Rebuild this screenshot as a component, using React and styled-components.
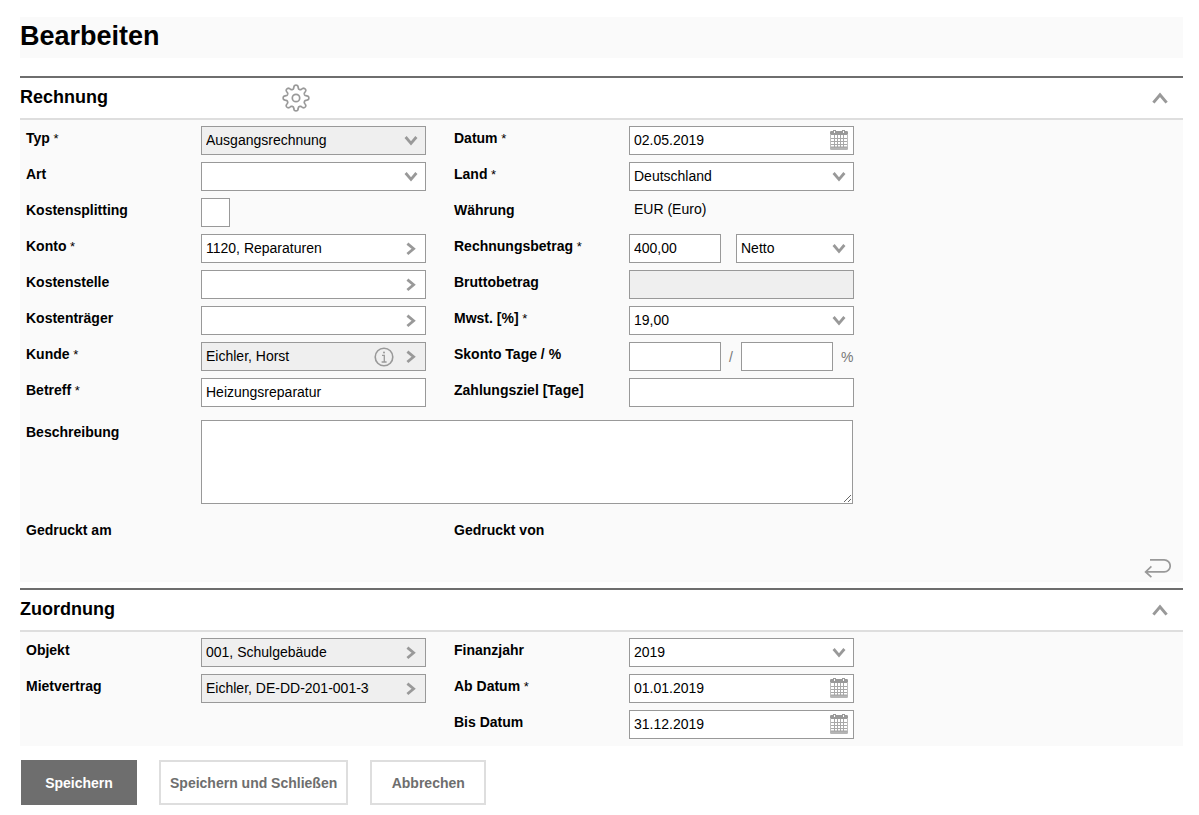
import React from "react";
import styled, { createGlobalStyle, css } from "styled-components";

const GlobalStyle = createGlobalStyle`
  *, *::before, *::after { box-sizing: border-box; }
  body {
    margin: 0;
    background: #fff;
    color: #000;
    font-family: "Liberation Sans", Arial, Helvetica, sans-serif;
    font-size: 14px;
  }
`;

const Page = styled.form`
  padding: 17px 16px 10px 20px;
`;

const Title = styled.h1`
  margin: 0 0 18px;
  height: 41px;
  background: #fafafa;
  font-size: 27px;
  line-height: 38px;
`;

const Section = styled.section`
  & + & {
    margin-top: 6px;
  }
`;

const SectionHeader = styled.header`
  display: flex;
  align-items: center;
  height: 44px;
  padding-right: 15px;
  border-top: 2px solid #6e6e6e;
  border-bottom: 2px solid #dedede;
`;

const SectionTitle = styled.h2`
  flex: 0 0 262px;
  margin: 0;
  font-size: 18px;
  line-height: 38px;
  padding-bottom: 2px;
`;

const IconButton = styled.button`
  display: flex;
  align-items: center;
  justify-content: center;
  flex: none;
  padding: 0;
  border: 0;
  background: none;
  color: #999;
  cursor: pointer;
`;

const CollapseButton = styled(IconButton)`
  margin-left: auto;
`;

const SectionBody = styled.div`
  padding: 6px 0 0 6px;
  background: #fafafa;
`;

const Columns = styled.div`
  display: grid;
  grid-template-columns: minmax(0, 400px) minmax(0, 400px);
  column-gap: 28px;
  padding-bottom: ${(p) => p.$bottom || 0}px;
`;

const Column = styled.div`
  display: flex;
  flex-direction: column;
  gap: 7px;
`;

const Row = styled.div`
  display: flex;
  align-items: flex-start;
  min-height: ${(p) => (p.$compact ? 25 : 29)}px;
`;

const Label = styled.label`
  flex: 0 0 175px;
  font-weight: bold;
  line-height: 25px;
`;

const Required = styled.span`
  font-size: 13px;
  font-weight: normal;
`;

const Controls = styled.div`
  display: flex;
  align-items: center;
  flex: 1;
  min-width: 0;
  gap: ${(p) => p.$gap || 0}px;
`;

const Frame = styled.div`
  display: grid;
  grid-template-columns: minmax(0, 1fr) auto auto;
  flex: ${(p) => (p.$width ? `0 1 ${p.$width}px` : "1 1 0")};
  min-width: 0;
  height: 29px;
  border: 1px solid #999;
  background: ${(p) => (p.$locked ? "#efefef" : "#fff")};
`;

const fieldText = css`
  width: 100%;
  min-width: 0;
  height: 27px;
  margin: 0;
  border: 0;
  border-radius: 0;
  outline: 0;
  background: transparent;
  color: #000;
  font: inherit;
  opacity: 1;
`;

const Input = styled.input`
  ${fieldText}
  padding: 0 ${(p) => (p.$room ? 28 : 4)}px 2px 4px;
`;

const Select = styled.select`
  ${fieldText}
  appearance: none;
  grid-area: 1 / 1 / 2 / 4;
  padding: 0 28px 2px 4px;
`;

const SelectArrow = styled.span`
  display: flex;
  align-items: center;
  justify-content: center;
  grid-area: 1 / 3 / 2 / 4;
  width: 28px;
  color: #999;
  pointer-events: none;
`;

const FieldButton = styled(IconButton)`
  width: ${(p) => p.$width || 28}px;
  height: 27px;
`;

const DateButton = styled(FieldButton)`
  padding-bottom: 2px;
`;

const Checkbox = styled.input`
  appearance: none;
  width: 29px;
  height: 29px;
  margin: 0;
  border: 1px solid #999;
  background: #fff;

  &:checked {
    box-shadow: inset 0 0 0 7px #fff;
    background: #6e6e6e;
  }
`;

const Value = styled.output`
  padding-left: 5px;
  line-height: 23px;
`;

const Unit = styled.span`
  color: #777;
`;

const TextArea = styled.textarea`
  flex: 0 1 652px;
  min-width: 0;
  height: 84px;
  padding: 4px;
  border: 1px solid #999;
  border-radius: 0;
  background: #fff;
  font: inherit;
  resize: both;
`;

const DescriptionRow = styled(Row)`
  margin: 13px 0 14px;
`;

const SectionFooter = styled.div`
  display: flex;
  justify-content: flex-end;
  padding: 15px 12px 4px 0;
`;

const Actions = styled.div`
  display: flex;
  gap: 22px;
  padding: 14px 0 0 1px;
`;

const Button = styled.button`
  min-width: 116px;
  height: 45px;
  padding: 0 9px;
  border: 2px solid ${(p) => (p.$primary ? "#6e6e6e" : "#dedede")};
  background: ${(p) => (p.$primary ? "#6e6e6e" : "#fff")};
  color: ${(p) => (p.$primary ? "#fff" : "#6e6e6e")};
  font: inherit;
  font-weight: bold;
  cursor: pointer;
`;

const ChevronDown = () => (
  <svg width="14" height="10" viewBox="0 0 14 10" fill="none" stroke="currentColor" strokeWidth="2.8" aria-hidden="true">
    <path d="M1.6 1 7 7.4 12.4 1" />
  </svg>
);

const ChevronRight = () => (
  <svg width="10" height="14" viewBox="0 0 10 14" fill="none" stroke="currentColor" strokeWidth="2.8" aria-hidden="true">
    <path d="M1.4 1.6 7.6 6.8l-6.2 5.2" />
  </svg>
);

const ChevronUp = () => (
  <svg width="16" height="12" viewBox="0 0 16 12" fill="none" stroke="currentColor" strokeWidth="3" aria-hidden="true">
    <path d="M1.4 10.6 8 2.8l6.6 7.8" />
  </svg>
);

const gearOutline =
  Array.from({ length: 192 }, (_, i) => {
    const angle = (i / 192) * Math.PI * 2;
    const radius = 11 + 1.9 * Math.tanh(1.8 * Math.cos(8 * angle));
    const x = 14 + radius * Math.cos(angle);
    const y = 14 + radius * Math.sin(angle);
    return `${i ? "L" : "M"}${x.toFixed(2)} ${y.toFixed(2)}`;
  }).join("") + "Z";

const Gear = () => (
  <svg width="28" height="28" viewBox="0 0 28 28" fill="none" stroke="currentColor" strokeWidth="1.7" strokeLinejoin="round" aria-hidden="true">
    <path d={gearOutline} />
    <circle cx="14" cy="14" r="3.7" />
  </svg>
);

const Info = () => (
  <svg width="20" height="20" viewBox="0 0 20 20" fill="none" stroke="currentColor" aria-hidden="true">
    <circle cx="10" cy="10" r="8.8" strokeWidth="1.6" />
    <path d="M8 8.3h2.3V15M7.6 15h5" strokeWidth="1.3" />
    <circle cx="10" cy="5.6" r="1" fill="currentColor" stroke="none" />
  </svg>
);

const Calendar = () => (
  <svg width="18" height="20" viewBox="0 0 18 20" aria-hidden="true">
    <path d="M0 2.2Q0 1 1.2 1h15.6Q18 1 18 2.2V5H0z" fill="#999" />
    <path d="M3 0h3v3H3zM12 0h3v3h-3z" fill="#999" />
    <path d="M4 1h1v2H4zM13 1h1v2h-1z" fill="#fff" />
    <path d="M.5 4v14M17.5 4v14" fill="none" stroke="#bdbdbd" />
    <path d="M4.5 5v12M7.5 5v12M10.5 5v12M13.5 5v12M1 8.5h16M1 11.5h16M1 14.5h16" fill="none" stroke="#a8a8a8" />
    <path d="M0 17h18v1.8q0 1.2-1.2 1.2H1.2Q0 20 0 18.800z" fill="#b5b5b5" />
    <path d="M1 16.500h16v1H1z" fill="#a0a0a0" />
  </svg>
);

const ReturnArrow = () => (
  <svg width="27" height="20" viewBox="0 0 27 20" fill="none" stroke="currentColor" strokeWidth="1.7" aria-hidden="true">
    <path d="M6 1.9h14.200a5.900 5.900 0 0 1 0 12H2M7.400 8.400 1.600 13.900l5.800 5.200" />
  </svg>
);

function LabelText({ text, required }) {
  return (
    <>
      {text}
      {required && <Required> *</Required>}
    </>
  );
}

function Field({ id, label, required, gap, children }) {
  return (
    <Row>
      <Label htmlFor={id}>
        <LabelText text={label} required={required} />
      </Label>
      <Controls $gap={gap}>{children}</Controls>
    </Row>
  );
}

function TextBox({ id, value = "", width, locked, ...rest }) {
  return (
    <Frame $width={width} $locked={locked}>
      <Input id={id} defaultValue={value} readOnly={locked} {...rest} />
    </Frame>
  );
}

function DropDown({ id, options, width, locked, ...rest }) {
  return (
    <Frame $width={width} $locked={locked}>
      <Select id={id} disabled={locked} {...rest}>
        {options.map((option) => (
          <option key={option}>{option}</option>
        ))}
      </Select>
      <SelectArrow>
        <ChevronDown />
      </SelectArrow>
    </Frame>
  );
}

function Picker({ id, value = "", locked, info }) {
  return (
    <Frame $locked={locked}>
      <Input id={id} defaultValue={value} readOnly={locked} $room={!info} />
      {info && (
        <FieldButton type="button" $width={26} aria-label="Information">
          <Info />
        </FieldButton>
      )}
      <FieldButton type="button" aria-label="Auswählen">
        <ChevronRight />
      </FieldButton>
    </Frame>
  );
}

function DateBox({ id, value }) {
  return (
    <Frame>
      <Input id={id} defaultValue={value} />
      <DateButton type="button" aria-label="Kalender öffnen">
        <Calendar />
      </DateButton>
    </Frame>
  );
}

export default function App() {
  return (
    <>
      <GlobalStyle />
      <Page onSubmit={(event) => event.preventDefault()}>
        <Title>Bearbeiten</Title>

        <Section>
          <SectionHeader>
            <SectionTitle>Rechnung</SectionTitle>
            <IconButton type="button" aria-label="Einstellungen">
              <Gear />
            </IconButton>
            <CollapseButton type="button" aria-label="Rechnung einklappen">
              <ChevronUp />
            </CollapseButton>
          </SectionHeader>
          <SectionBody>
            <Columns>
              <Column>
                <Field id="typ" label="Typ" required>
                  <DropDown id="typ" options={["Ausgangsrechnung"]} locked />
                </Field>
                <Field id="art" label="Art">
                  <DropDown id="art" options={[""]} />
                </Field>
                <Field id="splitting" label="Kostensplitting">
                  <Checkbox id="splitting" type="checkbox" />
                </Field>
                <Field id="konto" label="Konto" required>
                  <Picker id="konto" value="1120, Reparaturen" />
                </Field>
                <Field id="kostenstelle" label="Kostenstelle">
                  <Picker id="kostenstelle" />
                </Field>
                <Field id="kostentraeger" label="Kostenträger">
                  <Picker id="kostentraeger" />
                </Field>
                <Field id="kunde" label="Kunde" required>
                  <Picker id="kunde" value="Eichler, Horst" locked info />
                </Field>
                <Field id="betreff" label="Betreff" required>
                  <TextBox id="betreff" value="Heizungsreparatur" />
                </Field>
              </Column>
              <Column>
                <Field id="datum" label="Datum" required>
                  <DateBox id="datum" value="02.05.2019" />
                </Field>
                <Field id="land" label="Land" required>
                  <DropDown id="land" options={["Deutschland"]} />
                </Field>
                <Field id="waehrung" label="Währung">
                  <Value id="waehrung">EUR (Euro)</Value>
                </Field>
                <Field id="betrag" label="Rechnungsbetrag" required gap={15}>
                  <TextBox id="betrag" value="400,00" width={92} />
                  <DropDown options={["Netto", "Brutto"]} aria-label="Betragsart" />
                </Field>
                <Field id="brutto" label="Bruttobetrag">
                  <TextBox id="brutto" locked />
                </Field>
                <Field id="mwst" label="Mwst. [%]" required>
                  <DropDown id="mwst" options={["19,00"]} />
                </Field>
                <Field id="skonto" label="Skonto Tage / %" gap={8}>
                  <TextBox id="skonto" width={92} />
                  <Unit>/</Unit>
                  <TextBox width={92} aria-label="Skonto Prozent" />
                  <Unit>%</Unit>
                </Field>
                <Field id="ziel" label="Zahlungsziel [Tage]">
                  <TextBox id="ziel" />
                </Field>
              </Column>
            </Columns>
            <DescriptionRow>
              <Label htmlFor="beschreibung">Beschreibung</Label>
              <TextArea id="beschreibung" />
            </DescriptionRow>
            <Columns>
              <Row $compact>
                <Label as="span">Gedruckt am</Label>
              </Row>
              <Row $compact>
                <Label as="span">Gedruckt von</Label>
              </Row>
            </Columns>
            <SectionFooter>
              <IconButton type="button" aria-label="Zurück">
                <ReturnArrow />
              </IconButton>
            </SectionFooter>
          </SectionBody>
        </Section>

        <Section>
          <SectionHeader>
            <SectionTitle>Zuordnung</SectionTitle>
            <CollapseButton type="button" aria-label="Zuordnung einklappen">
              <ChevronUp />
            </CollapseButton>
          </SectionHeader>
          <SectionBody>
            <Columns $bottom={7}>
              <Column>
                <Field id="objekt" label="Objekt">
                  <Picker id="objekt" value="001, Schulgebäude" locked />
                </Field>
                <Field id="mietvertrag" label="Mietvertrag">
                  <Picker id="mietvertrag" value="Eichler, DE-DD-201-001-300" locked />
                </Field>
              </Column>
              <Column>
                <Field id="finanzjahr" label="Finanzjahr">
                  <DropDown id="finanzjahr" options={["2019"]} />
                </Field>
                <Field id="ab" label="Ab Datum" required>
                  <DateBox id="ab" value="01.01.2019" />
                </Field>
                <Field id="bis" label="Bis Datum">
                  <DateBox id="bis" value="31.12.2019" />
                </Field>
              </Column>
            </Columns>
          </SectionBody>
        </Section>

        <Actions>
          <Button type="submit" $primary>Speichern</Button>
          <Button type="button">Speichern und Schließen</Button>
          <Button type="button">Abbrechen</Button>
        </Actions>
      </Page>
    </>
  );
}
